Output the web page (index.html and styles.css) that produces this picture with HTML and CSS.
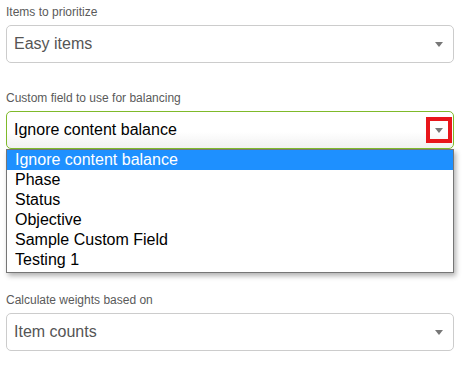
FILE: index.html
```html
<!DOCTYPE html>
<html lang="en">

<head>
    <meta charset="UTF-8">
    <meta name="viewport" content="width=device-width, initial-scale=1.0">
    <title>Balancing settings</title>
    <link rel="stylesheet" href="styles.css">
</head>

<body>

    <div class="form">
        <div class="field">
            <label class="field-label">Items to prioritize</label>
            <div class="select">
                <span class="select-value">Easy items</span>
                <span class="arrow"></span>
            </div>
        </div>

        <div class="field">
            <label class="field-label">Custom field to use for balancing</label>
            <div class="select open">
                <span class="select-value">Ignore content balance</span>
                <span class="arrow"></span>
                <span class="marker"></span>
            </div>
            <ul class="options">
                <li class="selected">Ignore content balance</li>
                <li>Phase</li>
                <li>Status</li>
                <li>Objective</li>
                <li>Sample Custom Field</li>
                <li>Testing 1</li>
            </ul>
        </div>

        <div class="field">
            <label class="field-label">Calculate weights based on</label>
            <div class="select">
                <span class="select-value">Item counts</span>
                <span class="arrow"></span>
            </div>
        </div>
    </div>

</body>

</html>
```

FILE: styles.css
```css
body {
    margin: 0;
    padding: 0;
    background: white;
    font-family: 'Liberation Sans', Arial, sans-serif;
}

.form {
    width: 448px;
    padding: 5px 0 0 6px;
}

.field {
    margin-bottom: 28px;
}

.field:has(.options) {
    margin-bottom: 20px;
}

.field-label {
    display: block;
    font-size: 12px;
    line-height: 14px;
    color: #5a5a5a;
    margin-bottom: 6px;
}

.select {
    position: relative;
    display: flex;
    align-items: center;
    justify-content: space-between;
    height: 38px;
    box-sizing: border-box;
    padding: 0 10px 0 7px;
    border: 1px solid #ccc;
    border-radius: 5px;
    background: white;
    font-size: 16px;
    color: #555;
}

.select.open {
    border-color: #7fba2a;
    color: #000;
    background: linear-gradient(#fff 55%, #f1f1f1);
}

.arrow {
    width: 0;
    height: 0;
    border-left: 4px solid transparent;
    border-right: 4px solid transparent;
    border-top: 5px solid #777;
}

.marker {
    position: absolute;
    top: 5px;
    right: 1px;
    width: 26px;
    height: 26px;
    box-sizing: border-box;
    border: 4px solid #e8161b;
}

.options {
    list-style: none;
    margin: 0;
    padding: 0 0 2px 0;
    border: 1px solid #767676;
    background: white;
    box-shadow: 2px 3px 5px rgba(0, 0, 0, 0.3);
}

.options li {
    height: 20px;
    line-height: 20px;
    padding-left: 8px;
    font-size: 16px;
    color: #000;
}

.options li.selected {
    background: #1e90ff;
    color: white;
}
```
